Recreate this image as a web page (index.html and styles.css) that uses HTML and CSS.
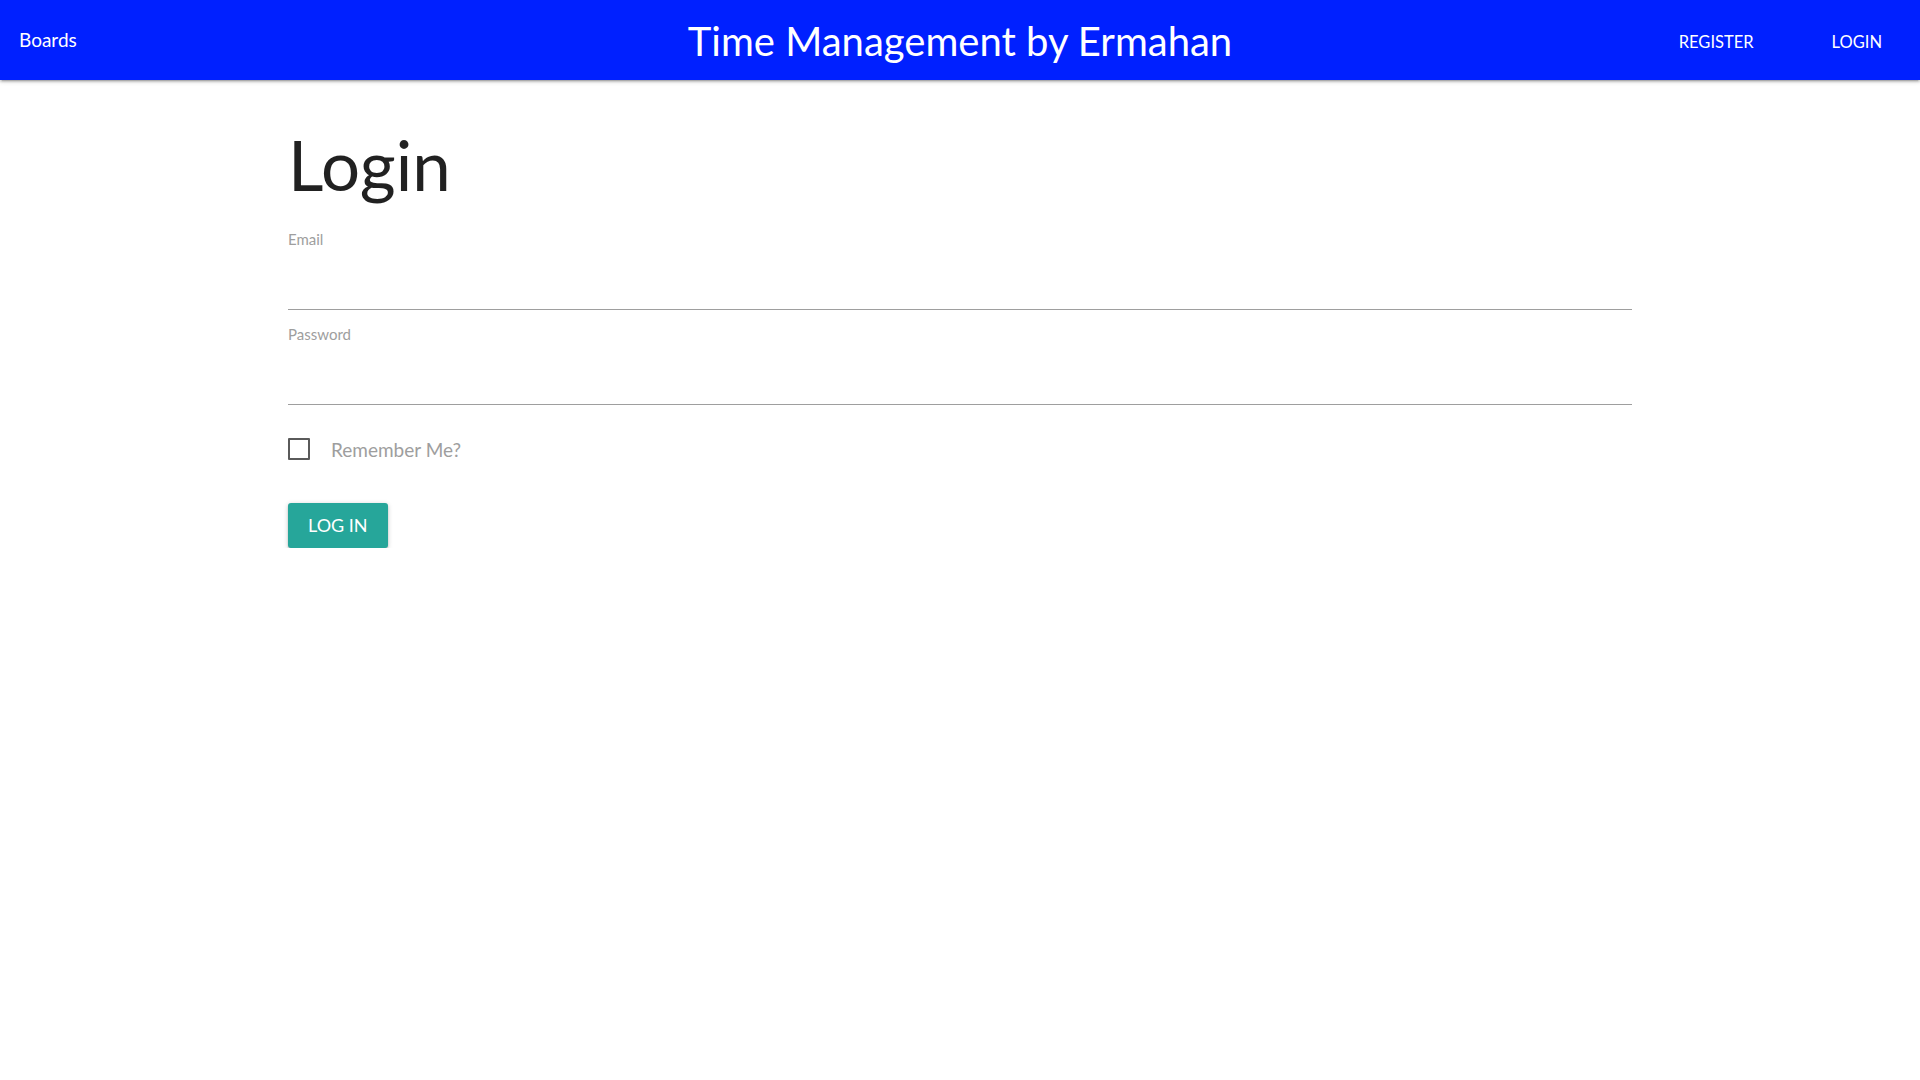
FILE: index.html
```html
<!DOCTYPE html>
<html lang="en">
<head>
<meta charset="utf-8">
<title>Login - Time Management by Ermahan</title>
<link rel="stylesheet" href="styles.css">
</head>
<body>
<nav class="navbar">
  <div class="nav-start">
    <a class="nav-left" href="#">Boards</a>
  </div>
  <a class="brand" href="#">Time Management by Ermahan</a>
  <ul class="nav-links">
    <li><a href="#">REGISTER</a></li>
    <li><a href="#">LOGIN</a></li>
  </ul>
</nav>
<main class="container">
  <h1 class="title">Login</h1>
  <form class="login-form">
    <div class="field">
      <label class="field-label" for="email">Email</label>
      <input class="field-input" id="email" type="email">
    </div>
    <div class="field">
      <label class="field-label" for="password">Password</label>
      <input class="field-input" id="password" type="password">
    </div>
    <label class="check">
      <span class="check-box"></span>
      <span class="check-text">Remember Me?</span>
    </label>
    <button class="btn" type="button">LOG IN</button>
  </form>
</main>
</body>
</html>
```
FILE: styles.css
```css
* { box-sizing: border-box; }
html, body { margin: 0; padding: 0; background: #fff; }
body { font-family: "Lato", "Noto Sans", sans-serif; color: rgba(0,0,0,0.87); }
a { text-decoration: none; color: inherit; }

.navbar {
  height: 80px;
  background: #0020ff;
  color: #fff;
  display: grid;
  grid-template-columns: 1fr auto 1fr;
  align-items: center;
  box-shadow: 0 2px 2px 0 rgba(0,0,0,0.14), 0 3px 1px -2px rgba(0,0,0,0.12), 0 1px 5px 0 rgba(0,0,0,0.2);
}
.nav-start { display: flex; }
.nav-left {
  font-size: 19px;
  padding-left: 19px;
  margin-top: -2px;
}
.brand {
  font-size: 40px;
  margin-top: 1px;
}
.nav-links {
  list-style: none;
  margin: 0;
  padding: 0;
  display: flex;
  justify-content: flex-end;
}
.nav-links a {
  display: block;
  padding: 0 38px 0 40px;
  font-size: 16.5px;
  margin-top: 4px;
}

.container {
  width: 70%;
  margin: 0 auto;
}
.title {
  font-size: 69px;
  font-weight: 400;
  line-height: 1.1;
  margin: 47px 0 26px;
  letter-spacing: 0;
}
.field {
  display: flex;
  flex-direction: column;
  margin-bottom: 14px;
}
.field-label {
  font-size: 15px;
  color: #9e9e9e;
  line-height: 20px;
}
.field-input {
  border: none;
  border-bottom: 1px solid #9e9e9e;
  height: 61px;
  outline: none;
  font: inherit;
  padding: 0;
  background: transparent;
}
.check {
  display: flex;
  align-items: center;
  margin-top: 33px;
  cursor: pointer;
}
.check-box {
  width: 22px;
  height: 22px;
  border: 2.5px solid #5a5a5a;
  border-radius: 1px;
}
.check-text {
  margin-left: 21px;
  font-size: 19px;
  color: #9e9e9e;
}
.btn {
  margin-top: 42px;
  display: block;
  height: 45px;
  padding: 0 20px;
  background: #26a69a;
  color: #fff;
  border: none;
  border-radius: 3px;
  font-family: inherit;
  font-size: 18px;
  box-shadow: 0 2px 2px 0 rgba(0,0,0,0.14), 0 3px 1px -2px rgba(0,0,0,0.12), 0 1px 5px 0 rgba(0,0,0,0.2);
}
```
